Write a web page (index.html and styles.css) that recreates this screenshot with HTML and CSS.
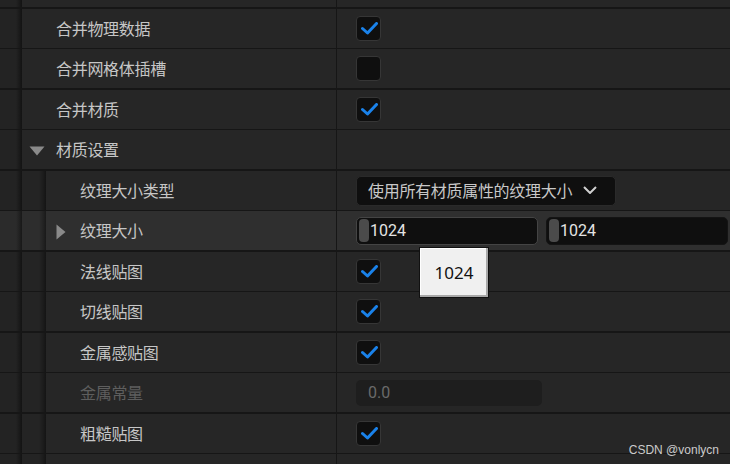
FILE: index.html
```html
<!DOCTYPE html>
<html lang="zh-CN">
<head>
    <meta charset="UTF-8">
    <title>Details</title>
    <link rel="stylesheet" href="styles.css">
</head>
<body>

    <div class="panel">
        <div class="row">
            <div class="gutter"></div>
            <div class="name"><span class="arrow"></span></div>
            <div class="value"><span class="check on"><svg viewBox="0 0 17 13"><path d="M1.5 6.5 L6.5 11 L15.5 1.5"/></svg></span></div>
        </div>
        <div class="row">
            <div class="gutter"></div>
            <div class="name"><span class="arrow"></span><span class="label">合并物理数据</span></div>
            <div class="value"><span class="check on"><svg viewBox="0 0 17 13"><path d="M1.5 6.5 L6.5 11 L15.5 1.5"/></svg></span></div>
        </div>
        <div class="row">
            <div class="gutter"></div>
            <div class="name"><span class="arrow"></span><span class="label">合并网格体插槽</span></div>
            <div class="value"><span class="check"></span></div>
        </div>
        <div class="row">
            <div class="gutter"></div>
            <div class="name"><span class="arrow"></span><span class="label">合并材质</span></div>
            <div class="value"><span class="check on"><svg viewBox="0 0 17 13"><path d="M1.5 6.5 L6.5 11 L15.5 1.5"/></svg></span></div>
        </div>
        <div class="row">
            <div class="gutter"></div>
            <div class="name">
                <span class="arrow"><svg viewBox="0 0 16 16"><path d="M0.5 3.5 L15.5 3.5 L8 12.5 Z"/></svg></span>
                <span class="label">材质设置</span>
            </div>
            <div class="value"></div>
        </div>
        <div class="row">
            <div class="gutter"></div>
            <div class="gutter deep"></div>
            <div class="name"><span class="arrow"></span><span class="label">纹理大小类型</span></div>
            <div class="value">
                <div class="combo">
                    <span>使用所有材质属性的纹理大小</span>
                    <svg viewBox="0 0 14 8"><path d="M1 1 L7 7 L13 1"/></svg>
                </div>
            </div>
        </div>
        <div class="row hot">
            <div class="gutter"></div>
            <div class="gutter deep"></div>
            <div class="name">
                <span class="arrow"><svg viewBox="0 0 16 16"><path d="M3.5 0.5 L12.5 8 L3.5 15.5 Z"/></svg></span>
                <span class="label">纹理大小</span>
            </div>
            <div class="value pair">
                <div class="num focus"><span class="grip"></span>1024</div>
                <div class="num"><span class="grip"></span>1024</div>
            </div>
        </div>
        <div class="row">
            <div class="gutter"></div>
            <div class="gutter deep"></div>
            <div class="name"><span class="arrow"></span><span class="label">法线贴图</span></div>
            <div class="value"><span class="check on"><svg viewBox="0 0 17 13"><path d="M1.5 6.5 L6.5 11 L15.5 1.5"/></svg></span></div>
        </div>
        <div class="row">
            <div class="gutter"></div>
            <div class="gutter deep"></div>
            <div class="name"><span class="arrow"></span><span class="label">切线贴图</span></div>
            <div class="value"><span class="check on"><svg viewBox="0 0 17 13"><path d="M1.5 6.5 L6.5 11 L15.5 1.5"/></svg></span></div>
        </div>
        <div class="row">
            <div class="gutter"></div>
            <div class="gutter deep"></div>
            <div class="name"><span class="arrow"></span><span class="label">金属感贴图</span></div>
            <div class="value"><span class="check on"><svg viewBox="0 0 17 13"><path d="M1.5 6.5 L6.5 11 L15.5 1.5"/></svg></span></div>
        </div>
        <div class="row">
            <div class="gutter"></div>
            <div class="gutter deep"></div>
            <div class="name"><span class="arrow"></span><span class="label off">金属常量</span></div>
            <div class="value"><div class="num disabled">0.0</div></div>
        </div>
        <div class="row">
            <div class="gutter"></div>
            <div class="gutter deep"></div>
            <div class="name"><span class="arrow"></span><span class="label">粗糙贴图</span></div>
            <div class="value"><span class="check on"><svg viewBox="0 0 17 13"><path d="M1.5 6.5 L6.5 11 L15.5 1.5"/></svg></span></div>
        </div>
        <div class="row">
            <div class="gutter"></div>
            <div class="gutter deep"></div>
            <div class="name"><span class="arrow"></span></div>
            <div class="value"><div class="num slider"></div></div>
        </div>
    </div>

    <div class="tooltip">1024</div>
    <div class="mark">CSDN @vonlycn</div>

</body>
</html>
```

FILE: styles.css
```css
body {
    margin: 0;
    width: 730px;
    height: 464px;
    overflow: hidden;
    background: #161616;
    font-family: "Noto Sans CJK SC", "Noto Sans", sans-serif;
    position: relative;
}
.panel {
    display: flex;
    flex-direction: column;
    margin-top: -32px;
}
.row {
    display: flex;
    height: 39px;
    margin-bottom: 1px;
    background: #262626;
}
.row:nth-child(odd) {
    margin-bottom: 2px;
}
.gutter {
    flex: none;
    width: 22px;
    background: linear-gradient(to right, #232323 16px, #1b1b1b 19px, #131313 22px);
}
.gutter.deep {
    width: 24px;
    background: linear-gradient(to right, #242424 17px, #1c1c1c 21px, #141414 24px);
}
.row.hot {
    background: #2f2f2f;
}
.row.hot .gutter {
    background: linear-gradient(to right, #2b2b2b 16px, #222 19px, #181818 22px);
}
.row.hot .gutter.deep {
    background: linear-gradient(to right, #2d2d2d 17px, #232323 21px, #191919 24px);
}
.name {
    flex: 1;
    display: flex;
    align-items: center;
    padding-left: 7px;
    padding-bottom: 2px;
}
.arrow {
    width: 16px;
    height: 16px;
    margin-right: 11px;
    flex: none;
}
.arrow svg {
    display: block;
    width: 16px;
    height: 16px;
    fill: #8a8a8a;
    margin-top: 2px;
}
.label {
    font-size: 16px;
    line-height: 1;
    letter-spacing: -0.3px;
    color: #c6c6c6;
    white-space: nowrap;
}
.label.off {
    color: #5e5e5e;
}
.value {
    flex: none;
    width: 394px;
    box-sizing: border-box;
    border-left: 1px solid #161616;
    padding-left: 19px;
    display: flex;
    align-items: center;
}
.check {
    width: 25px;
    height: 25px;
    box-sizing: border-box;
    border: 1px solid #363636;
    border-radius: 4px;
    background: #0f0f0f;
    display: flex;
    align-items: center;
    justify-content: center;
}
.check svg {
    width: 17px;
    height: 13px;
    margin-left: 1px;
    fill: none;
    stroke: #1a82ea;
    stroke-width: 3;
    stroke-linecap: round;
    stroke-linejoin: round;
}
.combo {
    width: 260px;
    height: 30px;
    box-sizing: border-box;
    border: 1px solid #2a2a2a;
    border-radius: 5px;
    background: #0f0f0f;
    display: flex;
    align-items: center;
    padding-left: 11px;
    padding-bottom: 1px;
    gap: 11px;
    font-size: 16px;
    line-height: 1;
    letter-spacing: -0.3px;
    color: #c8c8c8;
}
.combo svg {
    width: 14px;
    height: 8px;
    fill: none;
    stroke: #d0d0d0;
    stroke-width: 2;
}
.pair {
    gap: 8px;
    padding-right: 2px;
}
.num {
    flex: 1;
    height: 28px;
    box-sizing: border-box;
    border: 1px solid #141414;
    border-radius: 5px;
    background: #0f0f0f;
    display: flex;
    align-items: center;
    padding-left: 2px;
    font-family: Roboto, "Noto Sans", sans-serif;
    font-size: 16px;
    color: #e4e4e4;
}
.num.focus {
    border-color: #444;
}
.grip {
    width: 10px;
    height: 23px;
    border-radius: 4px;
    background: #4b4b4b;
    margin-right: 1px;
}
.num.disabled {
    flex: none;
    width: 186px;
    height: 26px;
    border: none;
    background: #1e1e1e;
    padding-left: 12px;
    color: #6a6a6a;
}
.num.slider {
    flex: none;
    width: 185px;
    height: 27px;
    border-color: #2c2c2c;
    background: linear-gradient(to right, #393939 87px, #161616 87px);
    margin-top: 12px;
}
.tooltip {
    position: absolute;
    left: 419px;
    top: 247px;
    width: 70px;
    height: 51px;
    box-sizing: border-box;
    border: 1px solid #111;
    box-shadow: inset -2px -2px 0 #a8a8a8, inset 1px 1px 0 #fff;
    background: #f0f0f0;
    display: flex;
    align-items: center;
    justify-content: center;
    font-family: "Noto Sans", sans-serif;
    font-size: 17px;
    color: #111;
}
.mark {
    position: absolute;
    right: 11px;
    top: 441px;
    font-family: "Liberation Sans", sans-serif;
    font-size: 12px;
    line-height: 18px;
    color: rgba(235, 235, 235, 0.85);
}
```
